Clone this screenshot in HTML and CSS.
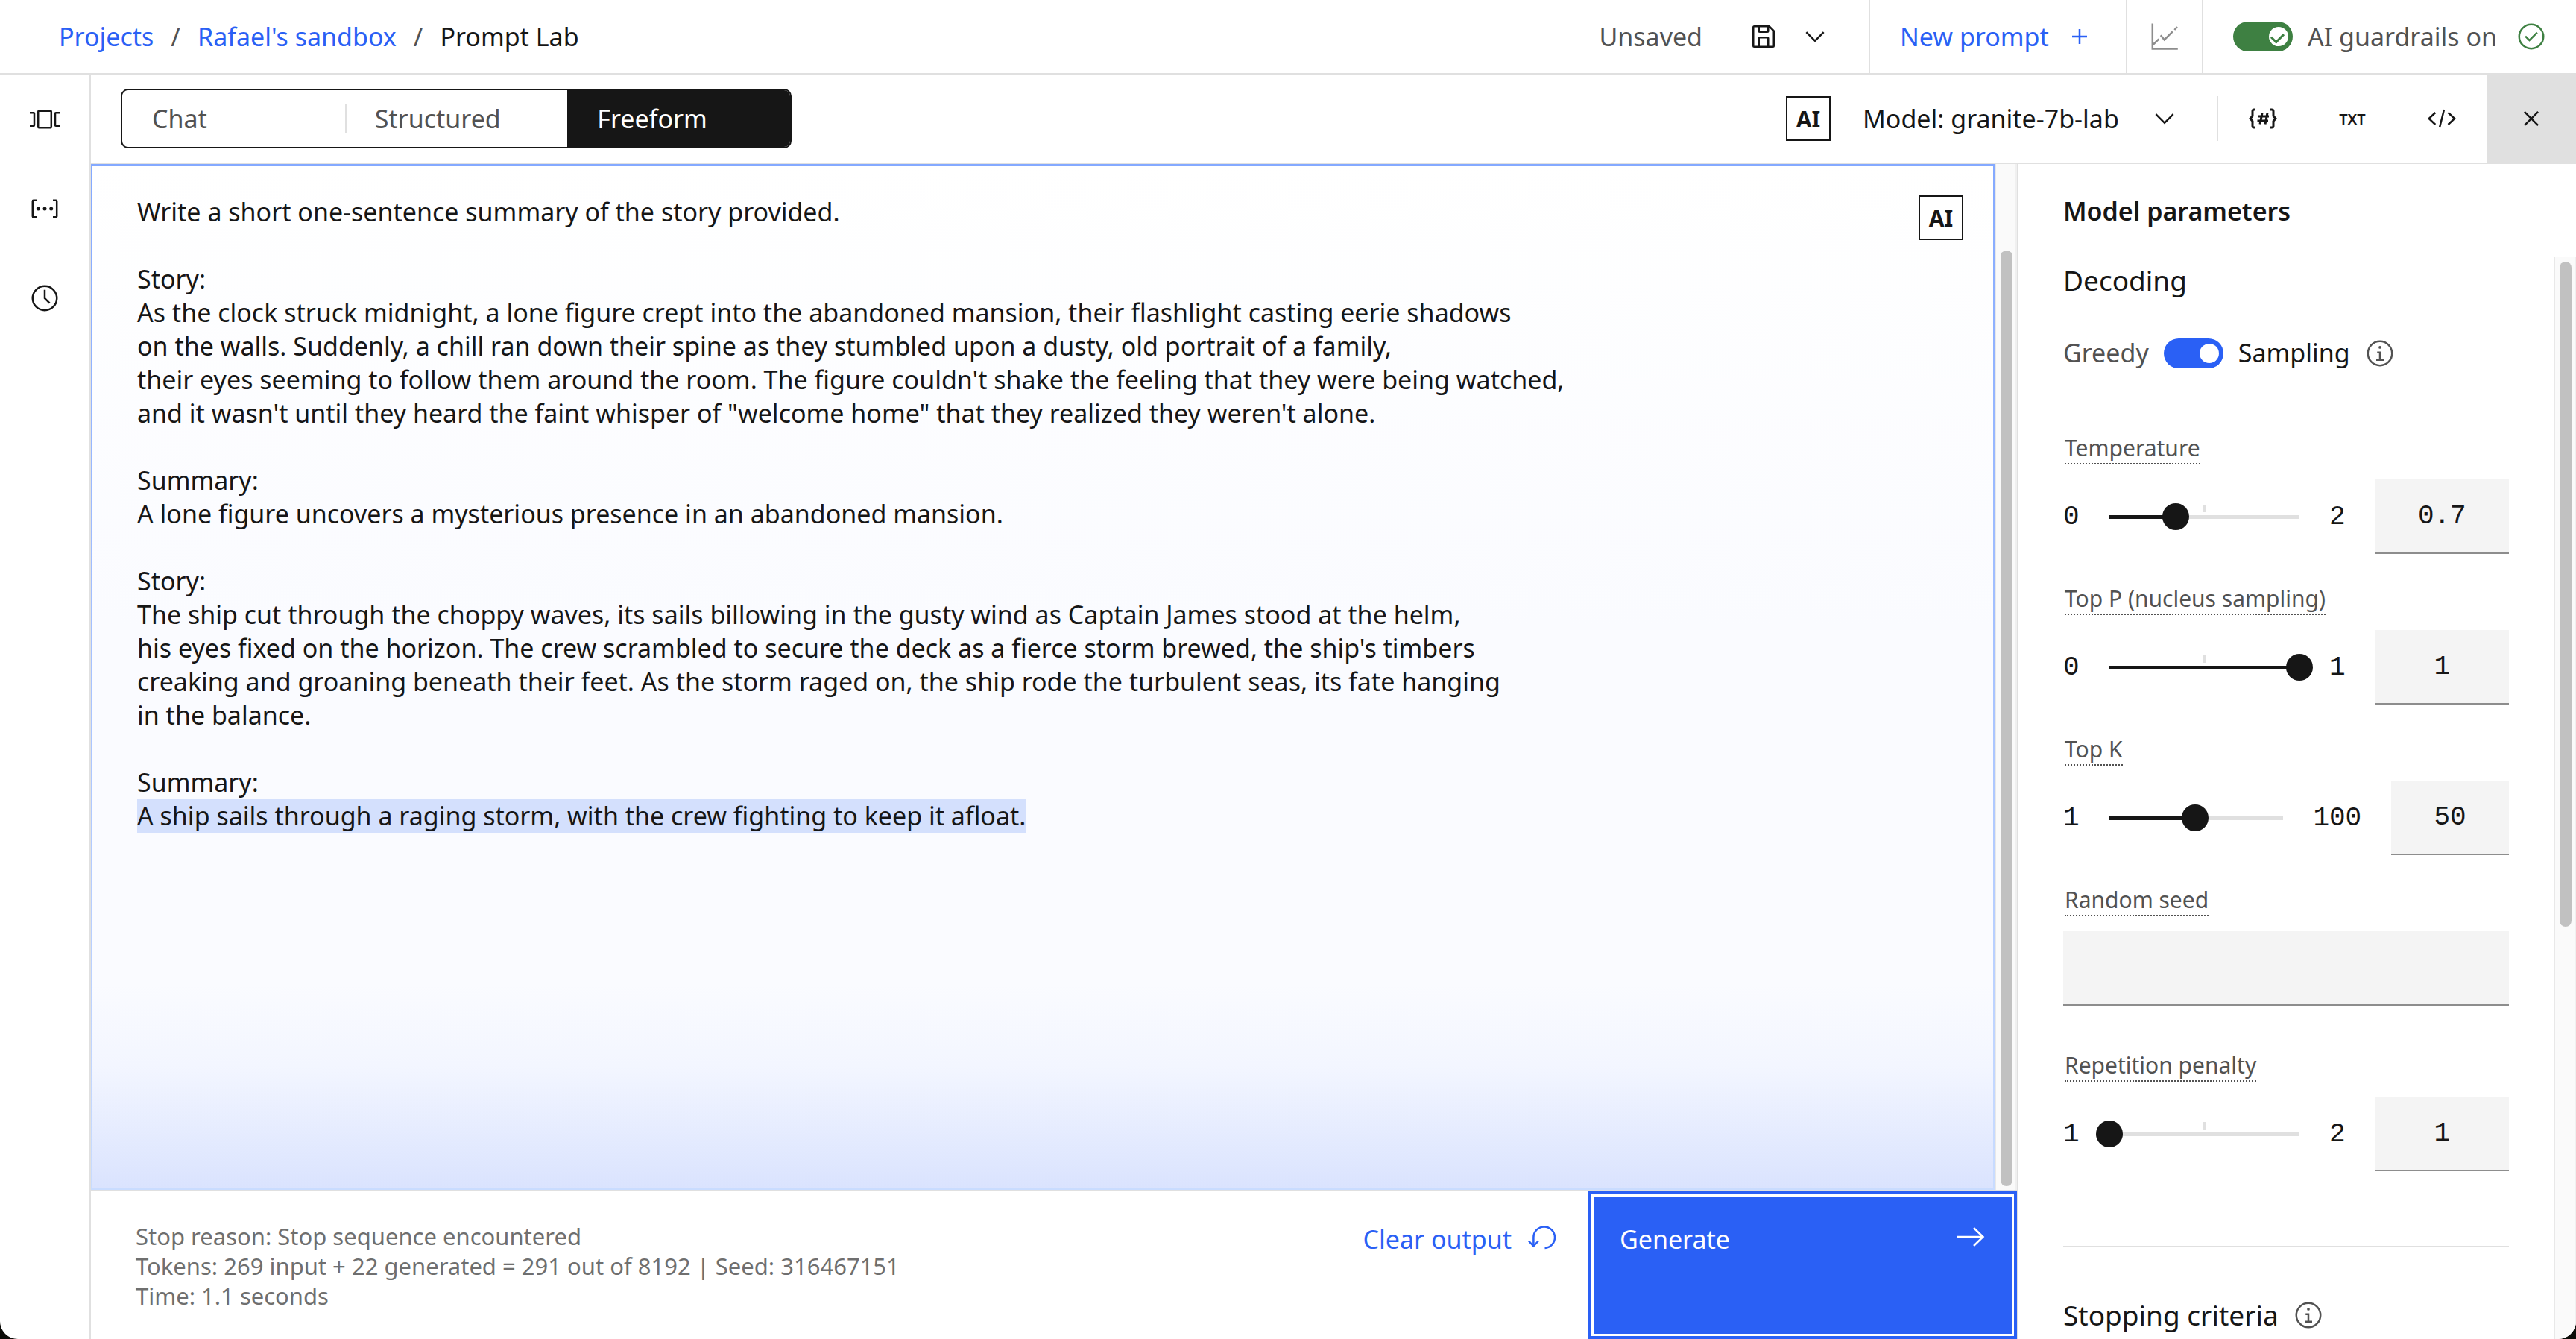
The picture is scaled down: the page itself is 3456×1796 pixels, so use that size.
FILE: index.html
```
<!DOCTYPE html>
<html lang="en">
<head>
<meta charset="utf-8">
<meta name="viewport" content="width=device-width, initial-scale=1">
<title>Prompt Lab</title>
<link rel="stylesheet" href="styles.css">
</head>
<body>
<div class="app">
  <header class="header">
    <nav class="breadcrumb" aria-label="Breadcrumb">
      <a class="link" href="#projects">Projects</a>
      <span class="slash">/</span>
      <a class="link" href="#sandbox">Rafael's sandbox</a>
      <span class="slash">/</span>
      <span>Prompt Lab</span>
    </nav>
    <div class="save-group">
      <span class="status">Unsaved</span>
      <button class="icon-button" type="button" aria-label="Save">
        <svg class="icon" viewBox="0 0 32 32"><path d="M27.71 9.29l-5-5A1 1 0 0 0 22 4H6a2 2 0 0 0-2 2v20a2 2 0 0 0 2 2h20a2 2 0 0 0 2-2V10a1 1 0 0 0-.29-.71ZM12 6h8v4h-8Zm8 20h-8v-8h8Zm2 0v-8a2 2 0 0 0-2-2h-8a2 2 0 0 0-2 2v8H6V6h4v4a2 2 0 0 0 2 2h8a2 2 0 0 0 2-2V6.410l4 4V26Z"/></svg>
      </button>
      <button class="icon-button" type="button" aria-label="Save options">
        <svg class="icon" viewBox="0 0 32 32"><path d="M16 22 6 12l1.400-1.400 8.600 8.600 8.600-8.600L26 12z"/></svg>
      </button>
    </div>
    <button class="new-prompt" type="button">New prompt
      <svg class="icon" viewBox="0 0 32 32"><path d="M17 15V8h-2v7H8v2h7v7h2v-7h7v-2z"/></svg>
    </button>
    <button class="evaluate" type="button" aria-label="Evaluate">
      <svg class="icon line" viewBox="0 0 40 40"><path d="M3.800 2.500V36.500H37.800M4.500 31l7.800-7.700M14.800 18.300l4.900 6 11.100-11M33.300 11l3.700-4"/></svg>
    </button>
    <div class="guardrails">
      <label class="guardrails-label"><input class="toggle toggle-green" type="checkbox" role="switch" checked>AI guardrails on</label>
      <svg class="icon icon-green" viewBox="0 0 32 32"><path d="M14 21.400 9 16.400 10.400 15l3.600 3.600L21.600 11l1.400 1.400z"/><circle class="ring" cx="16" cy="16" r="13"/></svg>
    </div>
  </header>

  <div class="body">
    <nav class="rail" aria-label="Prompt tools">
      <button class="rail-button" type="button" aria-label="Sample prompts">
        <svg class="icon line" viewBox="0 0 40 40"><rect x="11.200" y="8.800" width="17.600" height="22.400" rx="1"/><path d="M0 11.200h5a1 1 0 0 1 1 1v15.600a1 1 0 0 1-1 1H0M40 11.200h-5a1 1 0 0 0-1 1v15.600a1 1 0 0 0 1 1h5"/></svg>
      </button>
      <button class="rail-button" type="button" aria-label="Prompt variables">
        <svg class="icon line" viewBox="0 0 40 40"><path d="M9 8.800H4.800a1 1 0 0 0-1 1v20.400a1 1 0 0 0 1 1H9M31 8.800h4.200a1 1 0 0 1 1 1v20.400a1 1 0 0 1-1 1H31"/><g class="solid"><circle cx="11.300" cy="20" r="2.500"/><circle cx="20" cy="20" r="2.500"/><circle cx="28.700" cy="20" r="2.500"/></g></svg>
      </button>
      <button class="rail-button" type="button" aria-label="History">
        <svg class="icon" viewBox="0 0 32 32"><circle class="ring" cx="16" cy="16" r="13"/><path d="M20.600 22 15 16.400V7h2v8.600l5 5z"/></svg>
      </button>
    </nav>

    <div class="workspace">
      <div class="toolbar">
        <div class="switcher" role="tablist">
          <button class="switch" type="button" role="tab">Chat</button>
          <button class="switch switch-divided" type="button" role="tab">Structured</button>
          <button class="switch switch-on" type="button" role="tab" aria-selected="true">Freeform</button>
        </div>
        <div class="toolbar-actions">
          <button class="ai-label" type="button">AI</button>
          <button class="model" type="button">Model: granite-7b-lab
            <svg class="icon" viewBox="0 0 32 32"><path d="M16 22 6 12l1.400-1.400 8.600 8.600 8.600-8.600L26 12z"/></svg>
          </button>
          <span class="rule"></span>
          <button class="tool" type="button" aria-label="Prompt variables">
            <svg class="icon line bold" viewBox="0 0 40 40"><path d="M10 8H8a2 2 0 0 0-2 2v6.500L3 20l3 3.500V30a2 2 0 0 0 2 2h2M30 8h2a2 2 0 0 1 2 2v6.500l3 3.500-3 3.500V30a2 2 0 0 1-2 2h-2"/><path d="M19 12.500l-3 15M26 12.500l-3 15M13.500 17h14.500M12.500 23H27"/></svg>
          </button>
          <button class="tool tool-text" type="button">TXT</button>
          <button class="tool" type="button" aria-label="View code">
            <svg class="icon line" viewBox="0 0 40 40"><path d="M11.300 12l-8.600 8 8.600 8M28.500 12l8.600 8-8.600 8M23 8l-6 24"/></svg>
          </button>
          <button class="tool tool-close" type="button" aria-label="Close model parameters">
            <svg class="icon" viewBox="0 0 32 32"><path d="M24 9.400 22.600 8 16 14.600 9.400 8 8 9.400l6.600 6.600L8 22.600 9.400 24l6.600-6.600 6.600 6.600 1.400-1.400-6.600-6.600z"/></svg>
          </button>
        </div>
      </div>

      <div class="panes">
        <main class="prompt-pane">
          <div class="editor-wrap">
            <div class="editor">
              <div class="editor-text" contenteditable="true" role="textbox" aria-multiline="true" aria-label="Prompt" spellcheck="false">Write a short one-sentence summary of the story provided.

Story:
As the clock struck midnight, a lone figure crept into the abandoned mansion, their flashlight casting eerie shadows
on the walls. Suddenly, a chill ran down their spine as they stumbled upon a dusty, old portrait of a family,
their eyes seeming to follow them around the room. The figure couldn't shake the feeling that they were being watched,
and it wasn't until they heard the faint whisper of "welcome home" that they realized they weren't alone.

Summary:
A lone figure uncovers a mysterious presence in an abandoned mansion.

Story:
The ship cut through the choppy waves, its sails billowing in the gusty wind as Captain James stood at the helm,
his eyes fixed on the horizon. The crew scrambled to secure the deck as a fierce storm brewed, the ship's timbers
creaking and groaning beneath their feet. As the storm raged on, the ship rode the turbulent seas, its fate hanging
in the balance.

Summary:
<mark class="output">A ship sails through a raging storm, with the crew fighting to keep it afloat.</mark></div>
              <button class="ai-label" type="button">AI</button>
            </div>
            <div class="scrollbar"><div class="thumb thumb-editor"></div></div>
          </div>
          <footer class="footer">
            <p class="stats">Stop reason: Stop sequence encountered<br>Tokens: 269 input + 22 generated = 291 out of 8192 | Seed: 316467151<br>Time: 1.1 seconds</p>
            <button class="clear" type="button">Clear output
              <svg class="icon line" viewBox="0 0 40 40"><path d="M24.500 34A14.300 14.300 0 1 0 9.400 19.700V31.500M3 24.500l6.400 7 6.400-7"/></svg>
            </button>
            <button class="generate" type="button">Generate
              <svg class="icon line" viewBox="0 0 40 40"><path d="M2 19h34.500M24 7l12.500 12L24 31"/></svg>
            </button>
          </footer>
        </main>

        <aside class="params">
          <h2 class="params-title">Model parameters</h2>
          <div class="params-scroll">
            <div class="params-content">
              <h3 class="section-title">Decoding</h3>
              <label class="decoding">
                <span class="muted">Greedy</span>
                <input class="toggle" type="checkbox" role="switch" checked>
                <span>Sampling</span>
                <svg class="icon icon-info" viewBox="0 0 32 32"><path d="M17 22v-8h-4v2h2v6h-3v2h8v-2z"/><circle cx="16" cy="9.500" r="1.500"/><circle class="ring" cx="16" cy="16" r="13"/></svg>
              </label>

              <div class="field">
                <label class="label" for="temperature">Temperature</label>
                <div class="slider-row">
                  <span>0</span>
                  <div class="slider slider-tick"><input class="range" type="range" min="0" max="2" step="0.1" value="0.7" aria-label="Temperature" style="--fill: 35%"></div>
                  <span>2</span>
                  <input class="number" id="temperature" type="text" value="0.7">
                </div>
              </div>
              <div class="field">
                <label class="label" for="top-p">Top P (nucleus sampling)</label>
                <div class="slider-row">
                  <span>0</span>
                  <div class="slider slider-tick"><input class="range" type="range" min="0" max="1" step="0.1" value="1" aria-label="Top P" style="--fill: 100%"></div>
                  <span>1</span>
                  <input class="number" id="top-p" type="text" value="1">
                </div>
              </div>
              <div class="field">
                <label class="label" for="top-k">Top K</label>
                <div class="slider-row">
                  <span>1</span>
                  <div class="slider"><input class="range" type="range" min="1" max="100" value="50" aria-label="Top K" style="--fill: 49%"></div>
                  <span>100</span>
                  <input class="number" id="top-k" type="text" value="50">
                </div>
              </div>
              <div class="field field-seed">
                <label class="label" for="seed">Random seed</label>
                <input class="number number-wide" id="seed" type="text">
              </div>
              <div class="field">
                <label class="label" for="penalty">Repetition penalty</label>
                <div class="slider-row">
                  <span>1</span>
                  <div class="slider slider-tick"><input class="range" type="range" min="1" max="2" step="0.1" value="1" aria-label="Repetition penalty" style="--fill: 0%"></div>
                  <span>2</span>
                  <input class="number" id="penalty" type="text" value="1">
                </div>
              </div>
              <h3 class="section-title stopping">Stopping criteria
                <svg class="icon icon-info" viewBox="0 0 32 32"><path d="M17 22v-8h-4v2h2v6h-3v2h8v-2z"/><circle cx="16" cy="9.500" r="1.500"/><circle class="ring" cx="16" cy="16" r="13"/></svg>
              </h3>
            </div>
            <div class="scrollbar"><div class="thumb thumb-params"></div></div>
          </div>
        </aside>
      </div>
    </div>
  </div>
</div>
</body>
</html>
```
FILE: styles.css
```
:root {
  --text: #161616;
  --muted: #525252;
  --helper: #6f6f6f;
  --border: #e0e0e0;
  --field: #f4f4f4;
  --blue: #2a60f5;
  --green: #3e8042;
}

* {
  box-sizing: border-box;
}

body {
  margin: 0;
  background: #0c0c08;
  color: var(--text);
  font: 34px/45px "Noto Sans", "Open Sans", sans-serif;
}

button {
  display: flex;
  align-items: center;
  margin: 0;
  padding: 0;
  border: 0;
  background: none;
  color: inherit;
  font: inherit;
  text-align: left;
}

.app {
  display: flex;
  flex-direction: column;
  height: 100vh;
  overflow: hidden;
  border-radius: 0 0 24px 24px;
  background: #fff;
}

/* Icons */
.icon {
  flex: none;
  display: block;
  width: 40px;
  height: 40px;
  fill: currentColor;
}

.line {
  fill: none;
  stroke: currentColor;
  stroke-width: 2.5;
}

.bold {
  stroke-width: 3;
}

.solid {
  fill: currentColor;
  stroke: none;
}

.ring {
  fill: none;
  stroke: currentColor;
  stroke-width: 2;
}

.icon-green {
  color: var(--green);
}

.icon-info {
  color: var(--muted);
}

/* Header */
.header {
  flex: none;
  display: flex;
  height: 100px;
  border-bottom: 2px solid var(--border);
}

.breadcrumb {
  flex: 1;
  display: flex;
  align-items: center;
  gap: 23px;
  padding-left: 79px;
}

.link {
  color: var(--blue);
  text-decoration: none;
}

.slash {
  color: var(--muted);
}

.save-group {
  display: flex;
  align-items: center;
  gap: 29px;
  padding-right: 52px;
}

.status {
  padding-right: 33px;
  color: var(--muted);
}

.new-prompt {
  justify-content: space-between;
  width: 345px;
  padding: 0 42px 0 40px;
  border-left: 2px solid var(--border);
  color: var(--blue);
}

.evaluate {
  padding: 0 30px;
  border-left: 2px solid var(--border);
  color: #8d8d8d;
}

.guardrails {
  display: flex;
  align-items: center;
  justify-content: space-between;
  width: 502px;
  padding: 0 40px;
  border-left: 2px solid var(--border);
}

.guardrails-label {
  display: flex;
  align-items: center;
  gap: 20px;
  color: var(--muted);
}

.toggle {
  appearance: none;
  position: relative;
  width: 80px;
  height: 40px;
  margin: 0;
  border-radius: 20px;
  background: var(--blue);
}

.toggle::before {
  content: "";
  position: absolute;
  top: 7px;
  right: 6px;
  width: 26px;
  height: 26px;
  border-radius: 50%;
  background: #fff;
}

.toggle-green {
  background: var(--green);
}

.toggle-green::after {
  content: "";
  position: absolute;
  top: 12px;
  right: 15px;
  width: 8px;
  height: 13px;
  border: solid var(--green);
  border-width: 0 3px 3px 0;
  transform: rotate(45deg);
}

/* Left rail */
.body {
  flex: 1;
  display: flex;
  min-height: 0;
}

.rail {
  flex: none;
  width: 122px;
  border-right: 2px solid var(--border);
}

.rail-button {
  justify-content: center;
  width: 100%;
  height: 120px;
}

/* Toolbar */
.workspace {
  flex: 1;
  display: flex;
  flex-direction: column;
  min-width: 0;
}

.toolbar {
  flex: none;
  display: flex;
  align-items: center;
  justify-content: space-between;
  height: 120px;
  padding-left: 40px;
  border-bottom: 2px solid var(--border);
}

.switcher {
  display: flex;
  width: 900px;
  height: 80px;
  overflow: hidden;
  border: 2px solid var(--text);
  border-radius: 10px;
}

.switch {
  flex: 1;
  padding-left: 40px;
  color: var(--muted);
}

.switch-divided {
  background: linear-gradient(var(--border), var(--border)) left / 2px 40px no-repeat;
}

.switch-on {
  background: var(--text);
  color: #fff;
}

.toolbar-actions {
  align-self: stretch;
  display: flex;
  align-items: center;
}

.ai-label {
  flex: none;
  justify-content: center;
  width: 60px;
  height: 60px;
  border: 2px solid var(--text);
  background: #fff;
  font-size: 30px;
  font-weight: 700;
}

.model {
  justify-content: space-between;
  width: 518px;
  padding: 0 50px 0 43px;
}

.rule {
  width: 2px;
  height: 60px;
  background: var(--border);
}

.tool {
  align-self: stretch;
  justify-content: center;
  width: 120px;
}

.tool-text {
  font-size: 20px;
  font-weight: 600;
}

.tool-close {
  background: var(--border);
}

/* Prompt pane */
.panes {
  flex: 1;
  display: flex;
  min-height: 0;
}

.prompt-pane {
  flex: 1;
  display: flex;
  flex-direction: column;
  min-width: 0;
}

.editor-wrap {
  flex: 1;
  display: flex;
  min-height: 0;
  border-bottom: 2px solid var(--border);
}

.editor {
  flex: 1;
  display: flex;
  align-items: flex-start;
  gap: 40px;
  min-width: 0;
  padding: 40px 40px 40px 60px;
  border: 2px solid transparent;
  background:
    linear-gradient(#fff 0%, #fafbff 45%, #fafbff 80%, #f3f6ff 88%, #dae3fe 100%) padding-box,
    linear-gradient(#84a9ff, #c9dcff) border-box;
}

.editor-text {
  flex: 1;
  white-space: pre-wrap;
  outline: none;
}

.output {
  display: inline-block;
  background: #d4e0fd;
  color: inherit;
}

.scrollbar {
  flex: none;
  width: 30px;
  padding: 6px 4px 6px 6px;
  border-left: 2px solid #e8e8e8;
  border-right: 2px solid #f0f0f0;
  background: #fafafa;
}

.thumb {
  width: 16px;
  border-radius: 8px;
  background: #c1c1c1;
}

.thumb-editor {
  height: 92%;
  margin-top: 110px;
}

.thumb-params {
  height: 62%;
}

.footer {
  flex: none;
  display: flex;
  height: 198px;
}

.stats {
  flex: 1;
  margin: 0;
  padding: 40px 0 0 60px;
  color: var(--helper);
  font-size: 31px;
  line-height: 40px;
}

.clear {
  align-items: flex-start;
  gap: 20px;
  padding: 42px 43px 0 0;
  color: var(--blue);
}

.generate {
  align-items: flex-start;
  justify-content: space-between;
  width: 575px;
  padding: 42px 42px 0 42px;
  background: var(--blue);
  color: #fff;
  box-shadow: inset 0 0 0 4px var(--blue), inset 0 0 0 7px #fff;
}

/* Model parameters */
.params {
  flex: none;
  display: flex;
  flex-direction: column;
  width: 750px;
  border-left: 2px solid var(--border);
}

.params-title {
  flex: none;
  margin: 0;
  padding: 41px 60px 39px;
  font-size: 34px;
  font-weight: 600;
}

.params-scroll {
  flex: 1;
  display: flex;
  min-height: 0;
}

.params-content {
  flex: 1;
  min-width: 0;
  padding: 6px 60px 0;
  overflow: hidden;
}

.section-title {
  display: flex;
  align-items: center;
  gap: 20px;
  margin: 0;
  font-size: 37px;
  font-weight: 400;
  line-height: 50px;
}

.decoding {
  display: flex;
  align-items: center;
  gap: 20px;
  margin: 50px 0 85px;
}

.muted {
  color: var(--muted);
}

.field {
  display: flex;
  flex-direction: column;
  align-items: flex-start;
  gap: 20px;
  margin-bottom: 40px;
}

.field-seed {
  margin-bottom: 60px;
}

.label {
  margin-left: 2px;
  border-bottom: 2px dotted var(--muted);
  color: var(--muted);
  font-size: 30px;
  line-height: 40px;
}

.slider-row {
  display: flex;
  align-items: center;
  gap: 40px;
  width: 100%;
  font-family: "Liberation Mono", monospace;
  font-size: 36px;
}

.slider {
  flex: 1 1 200px;
  min-width: 0;
}

.slider-tick {
  background: linear-gradient(var(--border), var(--border)) 50% 2px / 4px 10px no-repeat;
}

/* The input overhangs its track by half a thumb on each side. */
.range {
  appearance: none;
  display: block;
  width: calc(100% + 36px);
  height: 36px;
  margin: 0 -18px;
  background: none;
}

.range::-webkit-slider-runnable-track {
  height: 36px;
  padding: 0;
  background:
    linear-gradient(90deg, var(--text) var(--fill), var(--border) var(--fill)) center / calc(100% - 36px) 5px no-repeat;
}

.range::-webkit-slider-thumb {
  appearance: none;
  width: 36px;
  height: 36px;
  border-radius: 50%;
  background: var(--text);
}

.number {
  flex: 1 1 124px;
  min-width: 0;
  height: 100px;
  padding: 0;
  border: 0;
  border-bottom: 2px solid #8d8d8d;
  border-radius: 0;
  background: var(--field);
  color: var(--text);
  font: 36px "Liberation Mono", monospace;
  text-align: center;
}

.number-wide {
  flex: none;
  width: 100%;
}

.stopping {
  margin-top: 100px;
  padding-top: 66px;
  border-top: 2px solid var(--border);
}
```
